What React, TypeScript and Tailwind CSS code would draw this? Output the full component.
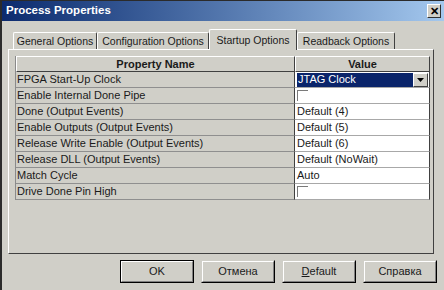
import React from "react";

type Row = { name: string; kind?: "select" | "check"; value?: string };

const rows: Row[] = [
  { name: "FPGA Start-Up Clock", kind: "select", value: "JTAG Clock" },
  { name: "Enable Internal Done Pipe", kind: "check" },
  { name: "Done (Output Events)", value: "Default (4)" },
  { name: "Enable Outputs (Output Events)", value: "Default (5)" },
  { name: "Release Write Enable (Output Events)", value: "Default (6)" },
  { name: "Release DLL (Output Events)", value: "Default (NoWait)" },
  { name: "Match Cycle", value: "Auto" },
  { name: "Drive Done Pin High", kind: "check" },
];

function Tab({ label, active, w }: { label: string; active?: boolean; w: string }) {
  if (active) {
    return (
      <div
        className={`${w} relative z-10 -mb-px flex h-[21px] items-start justify-center rounded-t-[2px] border-l border-t border-r border-l-white border-t-white border-r-[#404040] bg-[#d0cfc8] pt-[3px]`}
      >
        {label}
      </div>
    );
  }
  return (
    <div
      className={`${w} flex h-[17px] items-start justify-center rounded-t-[2px] border-l border-t border-r border-l-white border-t-white border-r-[#404040] pt-[1px]`}
    >
      {label}
    </div>
  );
}

function Check() {
  return (
    <div className="h-[11px] w-[11px] border-l border-t border-[#7a7a7a] bg-white" />
  );
}

function Button({ children, primary }: { children: React.ReactNode; primary?: boolean }) {
  return (
    <div
      className={`flex h-[23px] w-[74px] items-center justify-center border ${
        primary ? "border-black" : "border-transparent border-r-black border-b-black"
      }`}
    >
      <div className="flex h-full w-full items-center justify-center border border-l-white border-t-white border-r-[#808080] border-b-[#808080]">
        {children}
      </div>
    </div>
  );
}

export default function App() {
  return (
    <div className="flex h-[290px] w-[444px] flex-col overflow-hidden border-l-2 border-t border-[#2b2b2b] bg-[#d0cfc8] font-['Liberation_Sans',Arial,sans-serif] text-[11px] text-[#1a1a1a]">
      {/* title bar */}
      <div className="flex h-[20px] items-center justify-between bg-gradient-to-r from-[#0c2a6e] to-[#a4c8ee] pl-[4px] pr-[3px]">
        <span className="text-[11.5px] font-bold text-white">Process Properties</span>
        <div className="flex h-[14px] w-[14px] items-center justify-center border border-l-white border-t-white border-r-[#303030] border-b-[#303030] bg-[#d0cfc8] text-[11px] font-bold leading-none text-black">
          ✕
        </div>
      </div>

      {/* tabs */}
      <div className="ml-[6px] mt-[8px] flex items-end pl-[5px] text-[10.5px]">
        <Tab label="General Options" w="w-[84px]" />
        <Tab label="Configuration Options" w="w-[112px]" />
        <Tab label="Startup Options" active w="w-[88px]" />
        <Tab label="Readback Options" w="w-[98px]" />
      </div>

      {/* panel */}
      <div className="ml-[6px] h-[205px] w-[426px] border border-l-white border-t-white border-r-[#404040] border-b-[#404040] pl-[6px] pt-[6px]">
        <div className="w-[415px] border-l border-[#8a8a8a]">
          <div className="flex h-[16px] font-bold">
            <div className="flex w-[279px] items-center justify-center border border-l-white border-t-white border-r-[#404040] border-b-[#404040]">
              Property Name
            </div>
            <div className="flex flex-1 items-center justify-center border border-l-white border-t-white border-r-[#404040] border-b-[#404040]">
              Value
            </div>
          </div>
          {rows.map((r) => (
            <div key={r.name} className="flex h-[16px]">
              <div className="flex w-[279px] items-center border-b border-r border-b-[#8f8f8f] border-r-[#404040] pl-[1px]">
                {r.name}
              </div>
              <div className="flex flex-1 items-center border-b border-r border-b-[#a8a8a8] border-r-[#404040] bg-white pl-[2px]">
                {r.kind === "select" ? (
                  <div className="flex h-[14px] w-full items-center pr-[1px]">
                    <div className="flex h-full flex-1 items-center bg-[#0a246a] pl-[1px] text-white">
                      {r.value}
                    </div>
                    <div className="flex h-full w-[15px] items-center justify-center border border-l-white border-t-white border-r-[#404040] border-b-[#404040] bg-[#d0cfc8]">
                      <svg width="7" height="4" viewBox="0 0 7 4">
                        <path d="M0 0h7L3.5 4z" fill="#000" />
                      </svg>
                    </div>
                  </div>
                ) : r.kind === "check" ? (
                  <Check />
                ) : (
                  r.value
                )}
              </div>
            </div>
          ))}
        </div>
      </div>

      {/* buttons */}
      <div className="mt-[6px] flex justify-end gap-[7px] pr-[7px]">
        <Button primary>OK</Button>
        <Button>Отмена</Button>
        <Button>
          <span>
            <span className="underline">D</span>efault
          </span>
        </Button>
        <Button>Справка</Button>
      </div>
    </div>
  );
}
